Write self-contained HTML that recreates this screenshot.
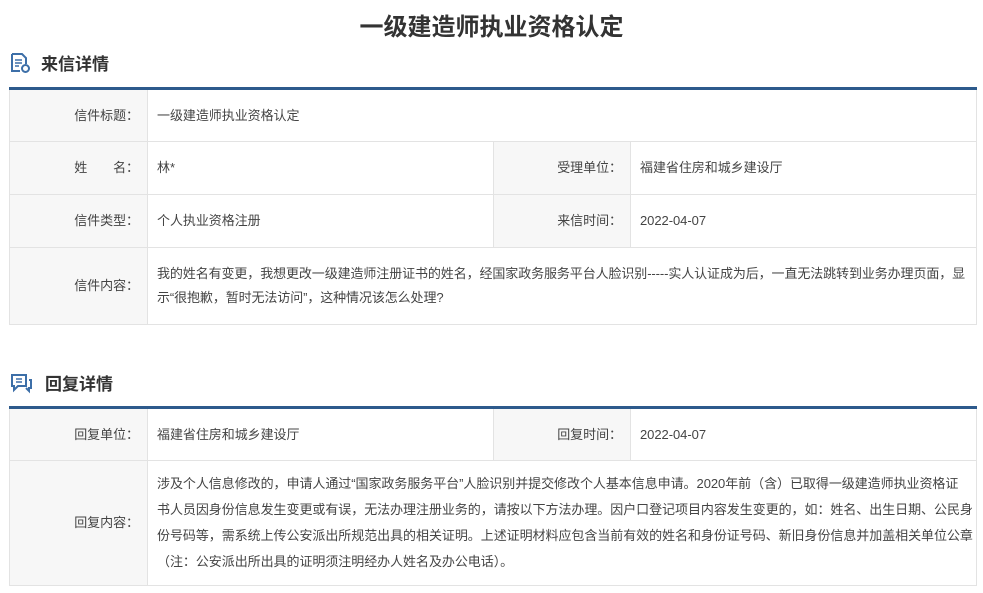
<!DOCTYPE html>
<html><head><meta charset="utf-8"><style>
body{margin:0;background:#fff;font-family:"Liberation Sans","Noto Sans CJK SC",sans-serif;color:#333;width:983px;height:593px;overflow:hidden;position:relative}
h1{position:absolute;top:11px;left:0;width:983px;text-align:center;margin:0;font-size:24px;font-weight:bold;color:#333;line-height:34px}
.sec{position:absolute;left:9px;font-size:17px;font-weight:bold;color:#333;display:flex;align-items:center}
.sec svg{margin-right:10px}
table{position:absolute;left:9px;width:968px;border-collapse:collapse;table-layout:fixed;border-top:3px solid #2d5a8c;font-size:13px;letter-spacing:-0.05px;color:#444}
td{border:1px solid #e3e3e3;padding:0 8px 0 9px;line-height:24px}
td.l{background:#f7f7f7;text-align:right;padding-right:8px}
</style></head><body>
<h1>一级建造师执业资格认定</h1>
<div class="sec" style="top:50px"><svg width="22" height="22" viewBox="0 0 22 22"><path d="M3 2h10l4 4v6M3 2v17h8" fill="none" stroke="#3d6fa8" stroke-width="2"/><path d="M6 8h7M6 11h7M6 14h4" stroke="#3d6fa8" stroke-width="1.6"/><circle cx="16.5" cy="16.5" r="3.5" fill="none" stroke="#3d6fa8" stroke-width="2"/></svg>来信详情</div>
<table style="top:87px">
<colgroup><col style="width:138px"><col style="width:346px"><col style="width:137px"><col></colgroup>
<tr style="height:53px"><td class="l">信件标题：</td><td colspan="3">一级建造师执业资格认定</td></tr>
<tr style="height:53px"><td class="l">姓&emsp;&emsp;名：</td><td>林*</td><td class="l">受理单位：</td><td>福建省住房和城乡建设厅</td></tr>
<tr style="height:53px"><td class="l">信件类型：</td><td>个人执业资格注册</td><td class="l">来信时间：</td><td>2022-04-07</td></tr>
<tr style="height:77px"><td class="l">信件内容：</td><td colspan="3" style="padding-right:2px;letter-spacing:-0.1px">我的姓名有变更，我想更改一级建造师注册证书的姓名，经国家政务服务平台人脸识别-----实人认证成为后，一直无法跳转到业务办理页面，显示“很抱歉，暂时无法访问”，这种情况该怎么处理?</td></tr>
</table>
<div class="sec" style="top:370px"><svg width="26" height="22" viewBox="0 0 26 22"><path d="M3 3h14v11H9l-4 4v-4H3z" fill="none" stroke="#3d6fa8" stroke-width="2"/><path d="M7 7h6M7 10h6" stroke="#3d6fa8" stroke-width="1.6"/><path d="M20 8h2v8h-2v3l-3-3" fill="none" stroke="#3d6fa8" stroke-width="2"/></svg>回复详情</div>
<table style="top:406px">
<colgroup><col style="width:138px"><col style="width:346px"><col style="width:137px"><col></colgroup>
<tr style="height:53px"><td class="l">回复单位：</td><td>福建省住房和城乡建设厅</td><td class="l">回复时间：</td><td>2022-04-07</td></tr>
<tr style="height:125px"><td class="l">回复内容：</td><td colspan="3" style="line-height:26px;white-space:nowrap;overflow:hidden;padding-right:0">涉及个人信息修改的，申请人通过“国家政务服务平台”人脸识别并提交修改个人基本信息申请。2020年前（含）已取得一级建造师执业资格证<br>书人员因身份信息发生变更或有误，无法办理注册业务的，请按以下方法办理。因户口登记项目内容发生变更的，如：姓名、出生日期、公民身<br>份号码等，需系统上传公安派出所规范出具的相关证明。上述证明材料应包含当前有效的姓名和身份证号码、新旧身份信息并加盖相关单位公章<br>（注：公安派出所出具的证明须注明经办人姓名及办公电话）。</td></tr>
</table>
</body></html>
